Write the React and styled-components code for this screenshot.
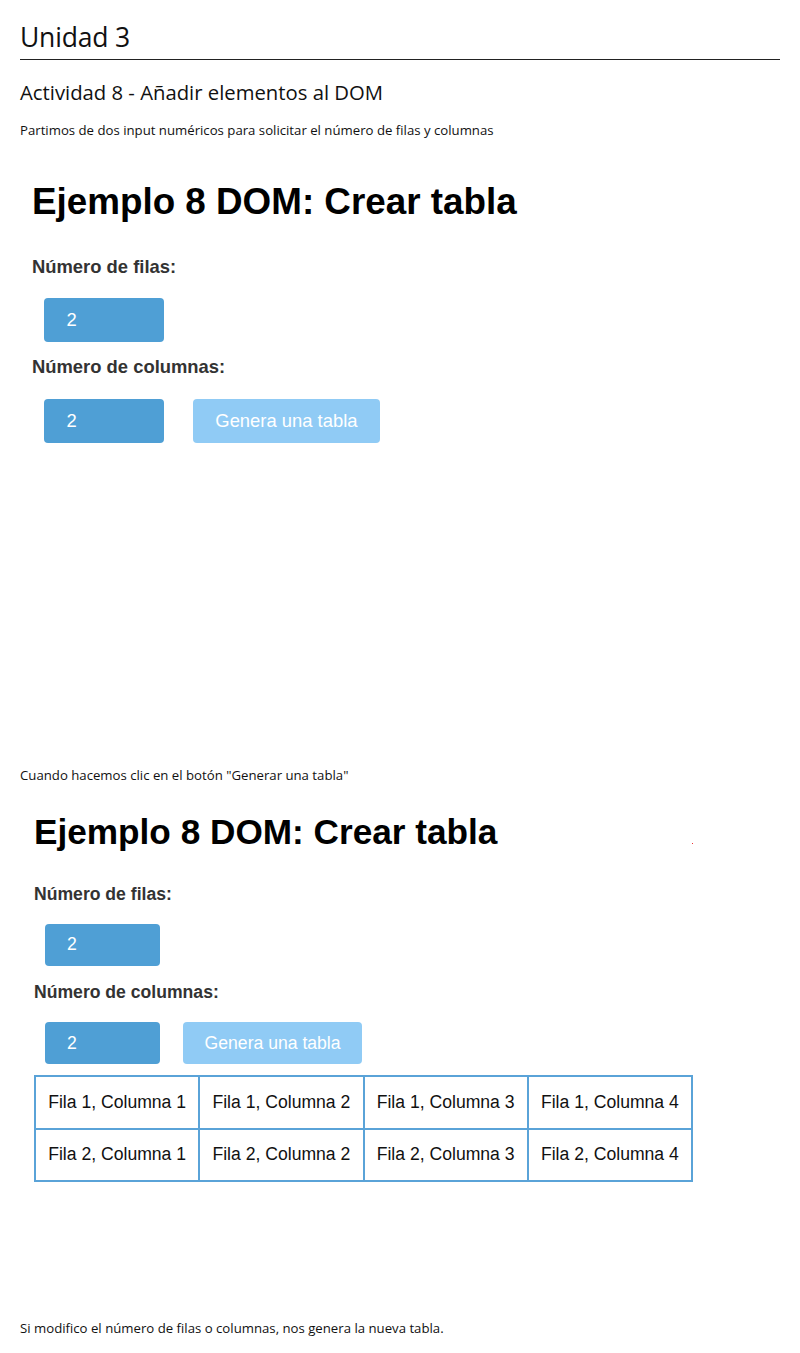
import styled, { createGlobalStyle } from 'styled-components';

const GlobalStyle = createGlobalStyle`
  html, body {
    margin: 0;
    padding: 0;
    background: #fff;
  }
`;

const Page = styled.div`
  padding: 0 20px;
  font-family: "Open Sans", "Noto Sans", sans-serif;
  color: #111;
`;

const Title = styled.h1`
  margin: 0;
  padding: 22px 0 7px;
  font-size: 26.5px;
  line-height: 30px;
  font-weight: 400;
  letter-spacing: -0.2px;
  border-bottom: 1px solid #222;
`;

const Subtitle = styled.h2`
  margin: 18px 0 0;
  font-size: 20.3px;
  line-height: 28px;
  font-weight: 400;
`;

const Text = styled.p`
  margin: ${p => p.$top}px 0 0;
  font-size: 13.2px;
  line-height: 16px;
`;

// captura del ejemplo, k = escala de la imagen
const Shot = styled.div`
  padding-left: ${p => p.$left}px;
  padding-top: ${p => p.$top}px;
  height: ${p => p.$height}px;
  box-sizing: border-box;
  font-family: "Liberation Sans", Arial, sans-serif;
`;

const HeadRow = styled.div`
  display: flex;
  align-items: center;
  justify-content: space-between;
  width: ${p => 599 * p.$k}px;
`;

const Heading = styled.h1`
  margin: 0;
  font-size: ${p => 32 * p.$k}px;
  line-height: ${p => 36.5 * p.$k}px;
  font-weight: 700;
  color: #000;
`;

const Dot = styled.span`
  width: 1px;
  height: 1px;
  margin-top: 22px;
  background: #e33;
`;

const Label = styled.div`
  margin-top: ${p => p.$gap * p.$k}px;
  font-size: ${p => 16 * p.$k}px;
  line-height: ${p => 18.3 * p.$k}px;
  font-weight: 700;
  color: #333;
`;

const Row = styled.div`
  display: flex;
  align-items: center;
  gap: ${p => p.$gap}px;
  margin-top: ${p => p.$top * p.$k}px;
  padding-left: ${p => 10 * p.$k}px;
`;

const NumInput = styled.div`
  width: ${p => 104.5 * p.$k}px;
  height: ${p => 38.2 * p.$k}px;
  box-sizing: border-box;
  padding-left: ${p => 20 * p.$k}px;
  display: flex;
  align-items: center;
  border-radius: 4px;
  background: #4f9fd5;
  color: #fff;
  font-size: ${p => 16 * p.$k}px;
`;

const Button = styled.div`
  width: ${p => 163 * p.$k}px;
  height: ${p => 38.2 * p.$k}px;
  display: flex;
  align-items: center;
  justify-content: center;
  border-radius: 4px;
  background: #90cbf5;
  color: #fff;
  font-size: ${p => 16 * p.$k}px;
`;

const Table = styled.table`
  margin-top: ${p => 10 * p.$k}px;
  border-collapse: collapse;
  border: 2px solid #5aa3d8;
`;

const Cell = styled.td`
  border: 2px solid #5aa3d8;
  width: ${p => 147.5 * p.$k}px;
  height: ${p => 45.8 * p.$k}px;
  padding: 0;
  text-align: center;
  font-size: ${p => 16 * p.$k}px;
  color: #111;
`;

const Demo = ({ k, left, top, height, gap, labelGap = 12.6, rows = 0, cols = 4, dot }) => (
  <Shot $left={left} $top={top} $height={height}>
    <HeadRow $k={k}>
      <Heading $k={k}>Ejemplo 8 DOM: Crear tabla</Heading>
      {dot && <Dot />}
    </HeadRow>
    <Label $k={k} $gap={29}>Número de filas:</Label>
    <Row $k={k} $top={17.8}>
      <NumInput $k={k}>2</NumInput>
    </Row>
    <Label $k={k} $gap={labelGap}>Número de columnas:</Label>
    <Row $k={k} $top={18.7} $gap={gap}>
      <NumInput $k={k}>2</NumInput>
      <Button $k={k}>Genera una tabla</Button>
    </Row>
    {rows > 0 && (
      <Table $k={k}>
        <tbody>
          {Array.from({ length: rows }, (_, r) => (
            <tr key={r}>
              {Array.from({ length: cols }, (_, c) => (
                <Cell $k={k} key={c}>Fila {r + 1}, Columna {c + 1}</Cell>
              ))}
            </tr>
          ))}
        </tbody>
      </Table>
    )}
  </Shot>
);

export default function App() {
  return (
    <>
      <GlobalStyle />
      <Page>
        <Title>Unidad 3</Title>
        <Subtitle>Actividad 8 - Añadir elementos al DOM</Subtitle>
        <Text $top={16}>Partimos de dos input numéricos para solicitar el número de filas y columnas</Text>
        <Demo k={1.15} left={12} top={43} height={629} gap={29} />
        <Text $top={0}>Cuando hacemos clic en el botón "Generar una tabla"</Text>
        <Demo k={1.1} left={14} top={29} height={537} gap={23} labelGap={14.5} rows={2} dot />
        <Text $top={0}>Si modifico el número de filas o columnas, nos genera la nueva tabla.</Text>
      </Page>
    </>
  );
}
